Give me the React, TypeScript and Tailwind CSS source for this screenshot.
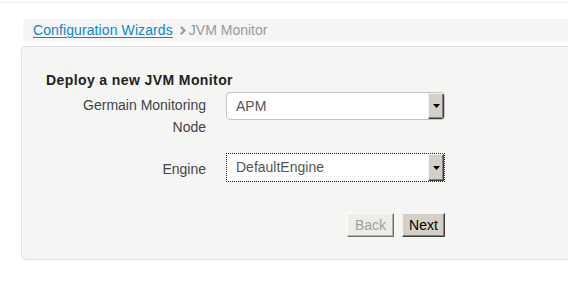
import React from 'react';

function ArrowButton() {
  return (
    <div className="w-[16px] self-stretch flex items-center justify-center bg-[#d4d0c8] border-t border-l border-t-[#f4f3ef] border-l-[#f4f3ef] border-r border-b border-r-[#404040] border-b-[#404040] shadow-[inset_-1px_-1px_#808080]">
      <svg width="7" height="4" viewBox="0 0 7 4">
        <polygon points="0,0 7,0 3.5,4" fill="#000" />
      </svg>
    </div>
  );
}

export default function App() {
  return (
    <div className="w-[568px] h-[286px] bg-white overflow-hidden font-['Liberation_Sans',Arial,sans-serif] text-[14px]">
      <div className="mt-[2px] h-px bg-[#ececec]" />

      {/* breadcrumb */}
      <div className="mt-[16px] ml-[23px] w-[600px] h-[22px] bg-[#f5f5f5] rounded-[4px] flex items-center pl-[10px]">
        <a className="text-[#0a88d0] underline underline-offset-2 leading-none tracking-[0.1px]">Configuration Wizards</a>
        <svg className="ml-[7px] mr-[2px]" width="7" height="9" viewBox="0 0 7 9">
          <polygon points="0,1.5 1.5,0 6,4.5 1.5,9 0,7.5 3,4.5" fill="#999" />
        </svg>
        <span className="text-[#999] leading-none">JVM Monitor</span>
      </div>

      {/* panel */}
      <div className="mt-[5px] ml-[21px] w-[600px] h-[214px] bg-[#f5f5f4] border border-[#e4dfe0] rounded-[4px] pt-[23px] pl-[24px]">
        <h2 className="font-bold text-[#222] leading-[20px] tracking-[0.4px]">Deploy a new JVM Monitor</h2>

        <div className="mt-[2px] grid grid-cols-[160px_219px] gap-x-[20px] text-[#444]">
          <div className="pt-[2px] text-right leading-[22px]">
            Germain Monitoring
            <br />
            Node
          </div>
          <div className="h-[28px] flex bg-white border border-[#c4c4c4] rounded-[4px] overflow-hidden">
            <span className="flex-1 pl-[9px] flex items-center text-[#555]">APM</span>
            <ArrowButton />
          </div>

          <div className="mt-[16px] pt-[2px] text-right self-center">Engine</div>
          <div className="mt-[15px] h-[29px] flex bg-white border border-dotted border-[#222]">
            <span className="flex-1 pl-[9px] flex items-center text-[#555]">DefaultEngine</span>
            <ArrowButton />
          </div>
        </div>

        <div className="mt-[31px] w-[399px] flex justify-end gap-[8px]">
          <button className="h-[24px] w-[47px] bg-[#eeede9] text-[#a0a0a0] border-t border-l border-[#fbfbfa] border-r border-b border-r-[#6e6e6a] border-b-[#6e6e6a] shadow-[inset_-1px_-1px_#b0aea8]">
            Back
          </button>
          <button className="h-[24px] w-[43px] bg-[#d4d0c8] text-black border-t border-l border-[#f6f5f2] border-r border-b border-r-[#404040] border-b-[#404040] shadow-[inset_-1px_-1px_#808080]">
            Next
          </button>
        </div>
      </div>
    </div>
  );
}
